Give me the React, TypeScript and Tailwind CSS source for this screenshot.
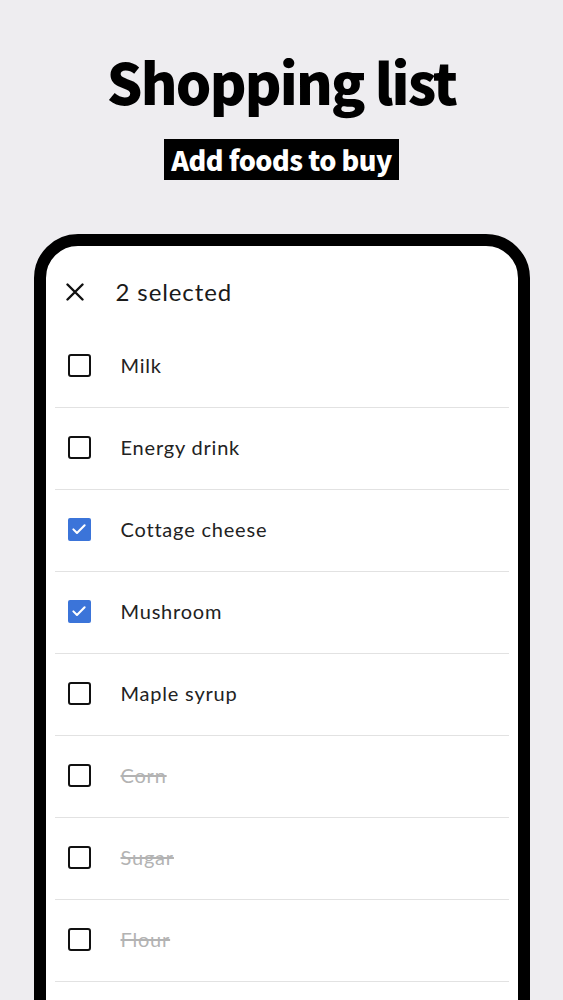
type Item = { name: string; checked?: boolean; done?: boolean };

const items: Item[] = [
  { name: 'Milk' },
  { name: 'Energy drink' },
  { name: 'Cottage cheese', checked: true },
  { name: 'Mushroom', checked: true },
  { name: 'Maple syrup' },
  { name: 'Corn', done: true },
  { name: 'Sugar', done: true },
  { name: 'Flour', done: true },
];

function Checkbox({ checked }: { checked?: boolean }) {
  if (checked) {
    return (
      <div className="w-[23px] h-[23px] rounded-[2px] bg-[#3b74d9] flex items-center justify-center">
        <svg width="18" height="18" viewBox="0 0 24 24" fill="none">
          <path d="M4.5 12.5l4.8 4.8L19.5 7" stroke="white" strokeWidth="2.8" strokeLinecap="round" strokeLinejoin="round" />
        </svg>
      </div>
    );
  }
  return <div className="w-[23px] h-[23px] rounded-[3px] border-[2.5px] border-[#111]" />;
}

export default function App() {
  return (
    <div className="h-[1000px] overflow-hidden bg-[#eeedf0] flex flex-col items-center">
      <h1
        className="mt-[45px] text-[56px] leading-[72px] font-black text-black tracking-[-1.8px]"
        style={{ fontFamily: '"Noto Sans CJK KR", sans-serif' }}
      >
        Shopping list
      </h1>
      <div
        className="mt-[22px] h-[41px] px-[7px] bg-black text-white text-[27px] leading-[41px] font-black tracking-[-0.5px]"
        style={{ fontFamily: '"Noto Sans CJK KR", sans-serif' }}
      >
        Add foods to buy
      </div>

      {/* Phone */}
      <div className="mt-[54px] w-[496px] h-[900px] shrink-0 border-[12px] border-black rounded-[44px] bg-white overflow-hidden">
        <div className="font-['Lato',sans-serif]">
          {/* Header */}
          <div className="h-[80px] pt-[11px] flex items-center">
            <svg className="ml-[20px]" width="18" height="18" viewBox="0 0 18 18" fill="none">
              <path d="M1.5 1.5l15 15M16.5 1.5l-15 15" stroke="#111" strokeWidth="2.4" strokeLinecap="round" />
            </svg>
            <span className="ml-[32px] text-[24px] text-[#1a1a1a] tracking-[0.9px]">2 selected</span>
          </div>

          {/* List */}
          <div className="px-[9px]">
            {items.map((item) => (
              <div key={item.name} className="h-[82px] pb-[3px] border-b border-[#e2e2e2] flex items-center">
                <div className="ml-[13px]">
                  <Checkbox checked={item.checked} />
                </div>
                <span
                  className={
                    item.done
                      ? 'ml-[30px] text-[20px] tracking-[0.8px] text-[#b3b3b3] line-through'
                      : 'ml-[30px] text-[20px] tracking-[0.8px] text-[#222]'
                  }
                >
                  {item.name}
                </span>
              </div>
            ))}
          </div>
        </div>
      </div>
    </div>
  );
}
